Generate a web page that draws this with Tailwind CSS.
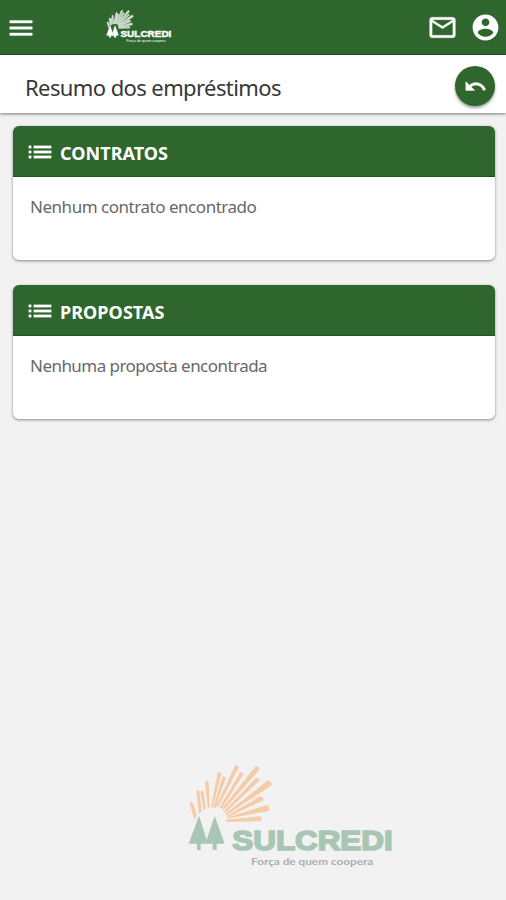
<!DOCTYPE html>
<html lang="pt-BR">
<head>
  <meta charset="UTF-8" />
  <meta name="viewport" content="width=device-width, initial-scale=1.0" />
  <title>Sulcredi - Resumo dos empréstimos</title>
  <script src="https://cdn.jsdelivr.net/npm/@tailwindcss/browser@4"></script>
</head>
<body class="relative min-h-screen overflow-hidden bg-[#f2f2f2] font-['Noto_Sans','Open_Sans',sans-serif]">

  <!-- shared logo shapes -->
  <svg width="0" height="0" class="absolute">
    <defs>
      <g id="rays">
        <path d="M43 194 L29 145 Q33 135 39 145 L50 180Z" />
        <path d="M57 177 L49 109 Q53 100 58 109 L65 170Z" />
        <path d="M71 166 L61 111 Q66 102 71 111 L77 162Z" />
        <path d="M84 162 L75 82 Q80 71 86 82 L89 160Z" />
        <path d="M93 156 L113 55 Q119 45 124 56 L98 158Z" />
        <path d="M100 157 L126 69 Q132 58 137 70 L106 160Z" />
        <path d="M109 153 L164 34 Q173 26 176 38 L114 157Z" />
        <path d="M119 157 L179 54 Q187 48 190 58 L124 162Z" />
        <path d="M127 159 L225 36 Q236 30 239 43 L131 166Z" />
        <path d="M132 169 L227 70 Q237 65 238 77 L136 174Z" />
        <path d="M135 177 L260 79 Q275 75 275 91 L138 181Z" />
        <path d="M139 183 L235 127 Q250 119 250 136 L142 187Z" />
        <path d="M140 188 L258 151 Q272 153 266 168 L228 175 L142 191Z" />
        <path d="M137 194 L238 184 Q247 186 243 198 L138 201Z" />
      </g>
      <g id="trees">
        <path d="M57 182 L84 266 H62 V285 H51 V266 H26Z" />
        <path d="M104 182 L134 266 H110 V285 H98 V266 H76Z" />
      </g>
    </defs>
  </svg>

  <header class="flex h-[55px] items-center border-b border-[#225323] bg-[#2f662e] text-white">
    <button class="ml-1.5" aria-label="Menu">
      <svg class="mt-px size-[30px]" viewBox="0 0 24 24" fill="currentColor" stroke="currentColor" stroke-width=".3"><path d="M3 18h18v-2H3v2zm0-5h18v-2H3v2zm0-7v2h18V6H3z" /></svg>
    </button>
    <svg class="mb-1 ml-[67px] h-[36px] w-[72px]" viewBox="0 0 660 340" fill="currentColor" font-family="Liberation Sans, sans-serif">
      <use href="#rays" stroke="currentColor" stroke-width="7" opacity=".8" />
      <use href="#trees" stroke="currentColor" stroke-width="8" />
      <text x="155" y="287" font-size="86" font-weight="bold" stroke="currentColor" stroke-width="4" textLength="481" lengthAdjust="spacingAndGlyphs">SULCREDI</text>
      <text x="213" y="332" font-size="32" textLength="367" lengthAdjust="spacingAndGlyphs">Força de quem coopera</text>
    </svg>
    <button class="ml-auto" aria-label="Mensagens">
      <svg class="size-[31px]" viewBox="0 0 24 24" fill="currentColor" stroke="currentColor" stroke-width=".2"><path d="M20 4H4c-1.1 0-1.99.9-1.99 2L2 18c0 1.1.9 2 2 2h16c1.1 0 2-.9 2-2V6c0-1.1-.9-2-2-2zm0 14H4V8l8 5 8-5v10zm-8-7L4 6h16l-8 5z" /></svg>
    </button>
    <button class="mr-[5px] ml-3" aria-label="Perfil">
      <svg class="size-[31px]" viewBox="0 0 24 24" fill="currentColor"><path d="M12 2C6.48 2 2 6.48 2 12s4.48 10 10 10 10-4.48 10-10S17.52 2 12 2zm0 3c1.66 0 3 1.34 3 3s-1.34 3-3 3-3-1.34-3-3 1.34-3 3-3zm0 14.2c-2.5 0-4.71-1.28-6-3.22.03-1.99 4-3.08 6-3.08 1.99 0 5.97 1.09 6 3.08-1.29 1.94-3.5 3.22-6 3.22z" /></svg>
    </button>
  </header>

  <div class="flex h-[58px] items-center justify-between bg-white pr-[11px] pl-[25px] shadow-[0_1px_3px_rgba(0,0,0,0.5)]">
    <h1 class="mt-1.5 text-[22px] tracking-[-0.6px] text-[#373737]">Resumo dos empréstimos</h1>
    <button class="mt-1 flex size-10 items-center justify-center rounded-full bg-[#2f662e] text-white shadow-[0_2px_3px_rgba(0,0,0,0.4)]" aria-label="Voltar">
      <svg class="size-[23px]" viewBox="0 0 24 24" fill="currentColor" stroke="currentColor" stroke-width=".7"><path d="M12.5 8c-2.65 0-5.05.99-6.9 2.6L2 7v9h9l-3.62-3.62c1.39-1.16 3.16-1.88 5.12-1.88 3.54 0 6.55 2.31 7.6 5.5l2.37-.78C21.08 11.03 17.15 8 12.5 8z" /></svg>
    </button>
  </div>

  <main class="mt-[13px] space-y-[25px] pr-[11px] pl-[13px]">
    <section class="h-[134px] overflow-hidden rounded-md bg-white shadow-[0_1px_3px_rgba(0,0,0,0.45)]">
      <div class="flex h-[51px] items-center gap-[5px] border-b border-[#225323] bg-[#2f662e] pt-1 pl-3 text-white">
        <svg class="mb-0.5 size-[30px]" viewBox="0 0 24 24" fill="currentColor" stroke="currentColor" stroke-width=".2"><path d="M3 13h2v-2H3v2zm0 4h2v-2H3v2zm0-8h2V7H3v2zm4 4h14v-2H7v2zm0 4h14v-2H7v2zM7 7v2h14V7H7z" /></svg>
        <h2 class="text-[18px] font-bold tracking-[0.05px]">CONTRATOS</h2>
      </div>
      <p class="mt-[18px] ml-[17px] text-[17px] leading-6 tracking-[-0.47px] text-[#686868]">Nenhum contrato encontrado</p>
    </section>

    <section class="h-[134px] overflow-hidden rounded-md bg-white shadow-[0_1px_3px_rgba(0,0,0,0.45)]">
      <div class="flex h-[51px] items-center gap-[5px] border-b border-[#225323] bg-[#2f662e] pt-1 pl-3 text-white">
        <svg class="mb-0.5 size-[30px]" viewBox="0 0 24 24" fill="currentColor" stroke="currentColor" stroke-width=".2"><path d="M3 13h2v-2H3v2zm0 4h2v-2H3v2zm0-8h2V7H3v2zm4 4h14v-2H7v2zm0 4h14v-2H7v2zM7 7v2h14V7H7z" /></svg>
        <h2 class="text-[18px] font-bold tracking-[0.05px]">PROPOSTAS</h2>
      </div>
      <p class="mt-[18px] ml-[17px] text-[17px] leading-6 tracking-[-0.54px] text-[#686868]">Nenhuma proposta encontrada</p>
    </section>
  </main>

  <!-- watermark over the page background -->
  <svg class="pointer-events-none absolute bottom-[25px] left-[180px] h-[120px] w-[220px]" viewBox="0 0 660 360" font-family="Liberation Sans, sans-serif">
    <use href="#rays" fill="#f6cba8" />
    <use href="#trees" fill="#a9c6b5" />
    <text x="157" y="285" font-size="84" font-weight="bold" fill="#a9c6b5" stroke="#a9c6b5" stroke-width="5" textLength="481" lengthAdjust="spacingAndGlyphs">SULCREDI</text>
    <text x="213" y="330" font-size="29" font-weight="bold" font-family="Lato, sans-serif" fill="#adadad" textLength="367" lengthAdjust="spacingAndGlyphs">Força de quem coopera</text>
  </svg>

</body>
</html>
